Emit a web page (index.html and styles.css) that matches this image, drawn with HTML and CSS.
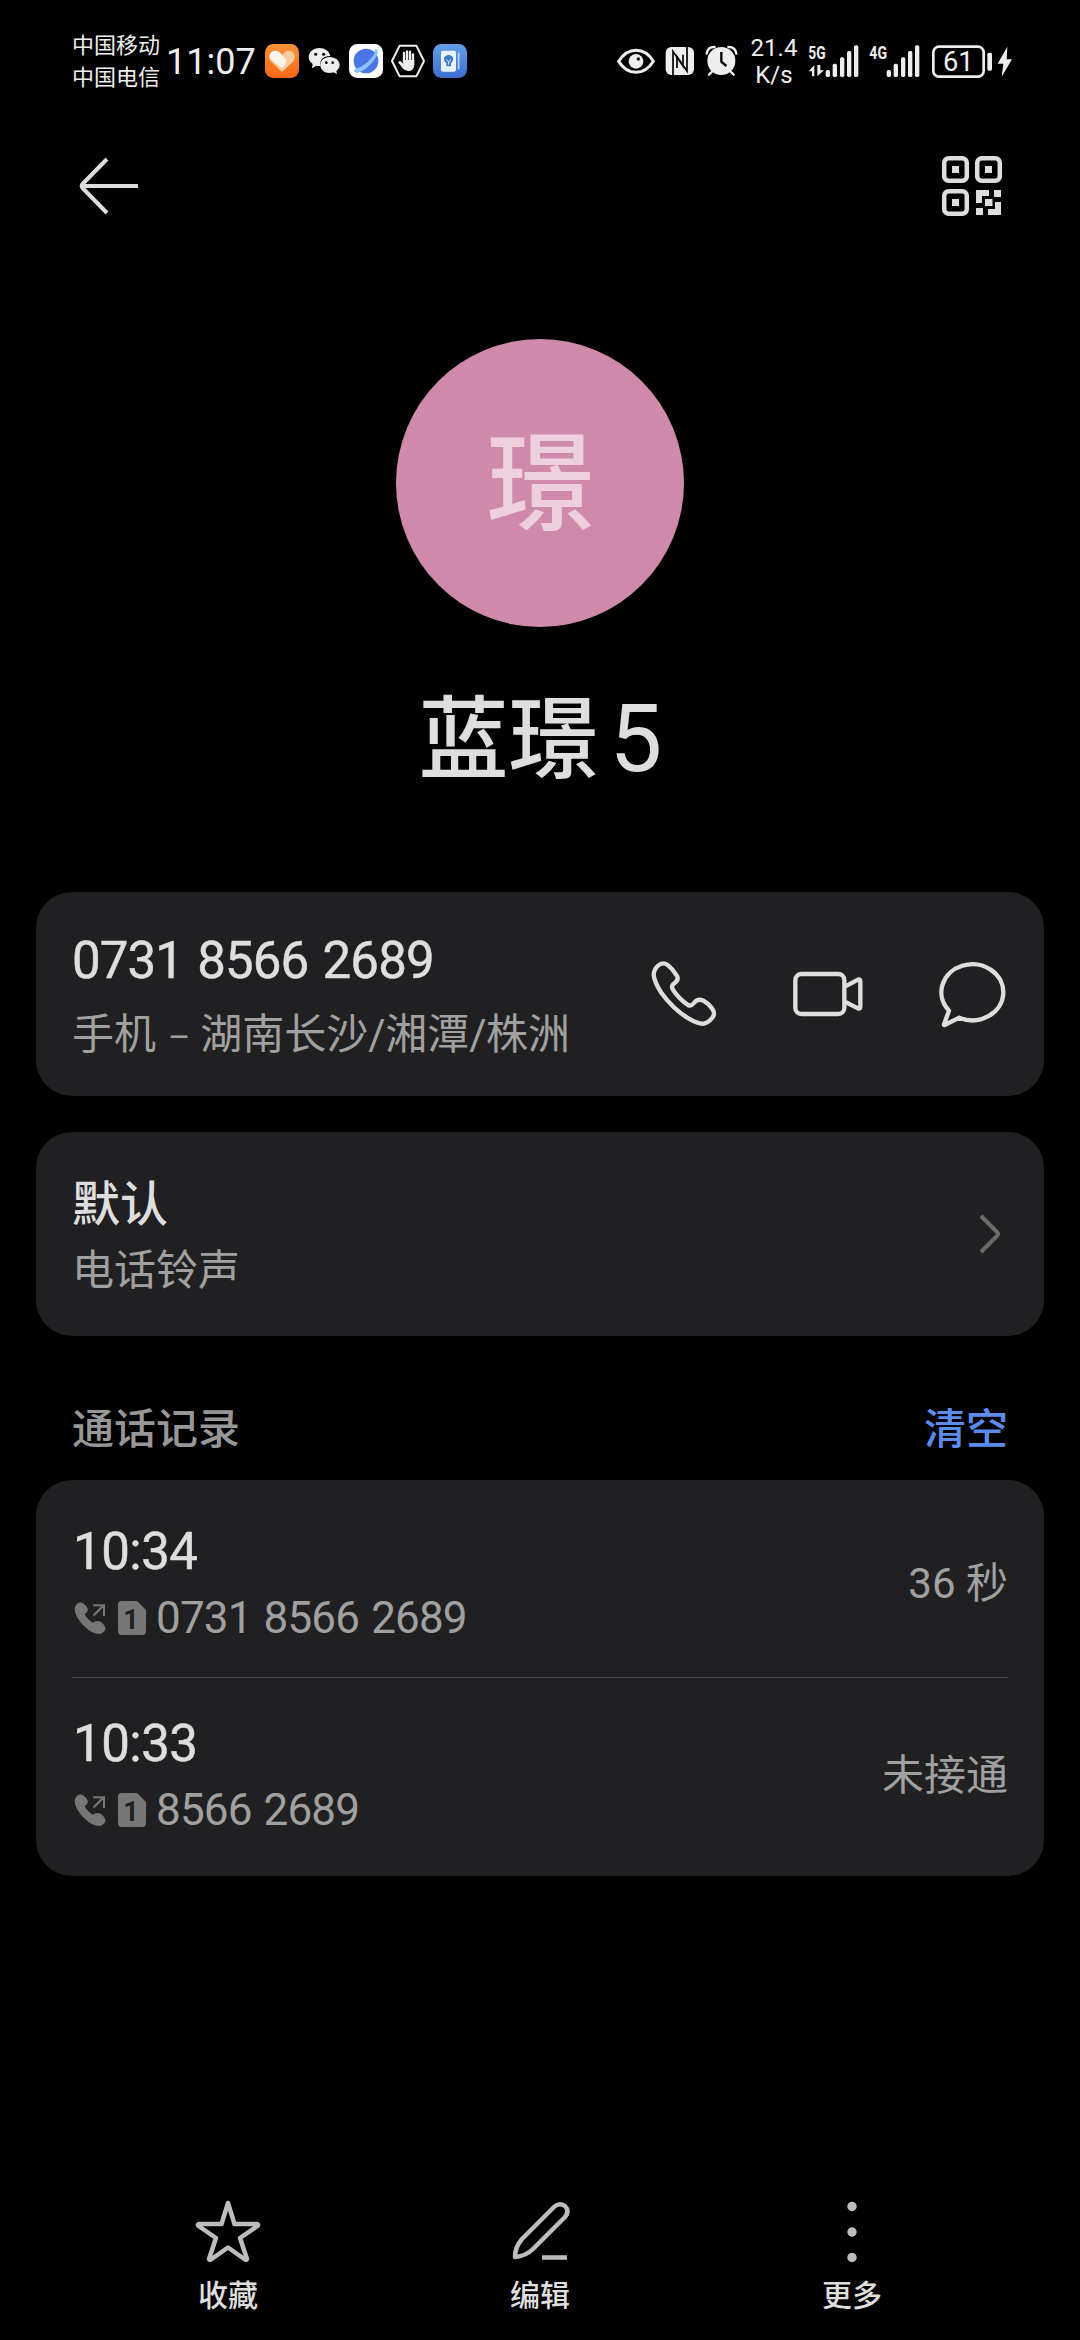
FILE: index.html
```html
<!DOCTYPE html>
<html lang="zh-CN">
<head>
    <meta charset="UTF-8">
    <meta name="viewport" content="width=device-width, initial-scale=1.0">
    <title>联系人详情</title>
    <link rel="stylesheet" href="styles.css">
</head>
<body>
    <div class="status-bar">
        <div class="carriers">
            <div>中国移动</div>
            <div>中国电信</div>
        </div>
        <div class="clock">11:07</div>
        <div class="app-icons">
            <svg width="34" height="34" viewBox="45 72 102 102">
                <defs>
                    <linearGradient id="orange" x1="0" y1="0" x2="0" y2="1"><stop offset="0" stop-color="#f8943a"/><stop offset="1" stop-color="#fa6618"/></linearGradient>
                    <linearGradient id="blue" x1="0" y1="0" x2="0" y2="1"><stop offset="0" stop-color="#63a0e8"/><stop offset="1" stop-color="#3b6ed0"/></linearGradient>
                </defs>
                <rect x="45" y="72" width="102" height="102" rx="25" fill="url(#orange)"/>
                <path d="M96 156L63 124Q53 110 62 99Q74 87 88 96L96 104L105 96Q120 87 131 99Q139 110 130 124Z" fill="#fccb9f"/>
                <path d="M96 144L63 120Q54 109 62 99Q74 87 88 96L107 117Q111 130 103 137Z" fill="#fff4ea"/>
            </svg>
            <svg width="34" height="34" viewBox="171 72 102 102">
                <path d="M208 84C190 84 176 96 176 111C176 120 181 127 188 132L186 145L199 137C203 138 207 138 212 137C207 120 222 107 241 108C238 93 224 84 208 84Z" fill="#eee"/>
                <path d="M239 111C223 111 211 122 211 135C211 149 223 159 239 159C243 159 247 158 250 157L261 162L259 153C265 149 269 142 269 135C269 122 256 111 239 111Z" fill="#eee"/>
                <circle cx="197" cy="103" r="4.500"/><circle cx="221" cy="103" r="4.500"/>
                <circle cx="229" cy="128" r="4"/><circle cx="248" cy="128" r="4"/>
            </svg>
            <svg width="34" height="34" viewBox="297 72 102 102">
                <rect x="297" y="72" width="102" height="102" rx="25" fill="#fff"/>
                <circle cx="348" cy="123" r="37" fill="#4a76e6"/>
                <path d="M314 148Q308 160 323 158Q345 152 366 128Q386 105 383 90Q380 85 371 90Q382 92 365 113Q345 138 314 148Z" fill="#8bc4fa"/>
            </svg>
            <svg width="34" height="34" viewBox="423 72 102 102">
                <path d="M449 77H499L522 123L499 169H449L426 123Z" fill="none" stroke="#eee" stroke-width="6" stroke-linejoin="round"/>
                <path d="M462 125V99M471 125V94M480 125V95M489 127V103" stroke="#eee" stroke-width="7" stroke-linecap="round"/>
                <path d="M458 120H493V135Q491 153 475 153Q463 152 457 143L445 128Q445 122 451 123L460 131Z" fill="#eee"/>
            </svg>
            <svg width="34" height="34" viewBox="549 72 102 102">
                <rect x="549" y="72" width="102" height="102" rx="25" fill="url(#blue)"/>
                <rect x="573" y="92" width="45" height="63" rx="6" fill="#e6f2fd"/>
                <path d="M626 98V148" stroke="#b8d6f5" stroke-width="5"/>
                <path d="M589 129C575 119 583 105 596 105C609 105 616 119 603 129V139H589Z" fill="#3f79c9"/>
                <path d="M589 119L596 125L603 119M596 125V134" fill="none" stroke="#e6f2fd" stroke-width="3"/>
            </svg>
        </div>
        <div class="system-icons">
            <svg width="38" height="34" viewBox="49 72 114 102">
                <path d="M54 124Q75 91 106 91Q138 91 158 124Q138 157 106 157Q75 157 54 124Z" fill="none" stroke="#eee" stroke-width="9"/>
                <circle cx="106" cy="124" r="22" fill="#eee"/><circle cx="113" cy="117" r="5"/>
            </svg>
            <svg class="nfc" width="30" height="34" viewBox="194 72 90 102">
                <rect x="196" y="81" width="85" height="84" rx="17" fill="#eee"/>
                <path d="M218 165V94L248 138V104" fill="none" stroke="#000" stroke-width="5"/>
                <path d="M230 144V110L260 153V81" fill="none" stroke="#000" stroke-width="5"/>
            </svg>
            <svg width="34" height="34" viewBox="314 72 102 102">
                <path d="M319 101Q322 80 343 81M384 81Q405 80 408 101M334 156L326 164M392 156L400 164" stroke="#eee" stroke-width="7" fill="none" stroke-linecap="round"/>
                <circle cx="363" cy="123" r="42" fill="#eee"/>
                <path d="M363 96V125L378 138" fill="none" stroke="#000" stroke-width="7"/>
            </svg>
            <div class="speed">
                <div>21.4</div>
                <div>K/s</div>
            </div>
            <svg width="52" height="34" viewBox="24 72 156 102" fill="#eee">
                <text x="25" y="118" class="net" textLength="52" lengthAdjust="spacingAndGlyphs">5G</text>
                <path d="M26 154L43 135V169H36V154ZM52 135V169L72 151H61V135Z"/>
                <rect x="77" y="150" width="13" height="21" rx="5"/><rect x="98" y="131" width="13" height="40" rx="5"/><rect x="120" y="112" width="13" height="59" rx="5"/><rect x="141" y="93" width="13" height="78" rx="5"/><rect x="162" y="76" width="13" height="95" rx="5"/>
            </svg>
            <svg class="sim-two" width="52" height="34" viewBox="207 72 156 102" fill="#eee">
                <text x="208" y="118" class="net" textLength="53" lengthAdjust="spacingAndGlyphs">4G</text>
                <rect x="260" y="150" width="13" height="21" rx="5"/><rect x="281" y="131" width="13" height="40" rx="5"/><rect x="303" y="112" width="13" height="59" rx="5"/><rect x="324" y="93" width="13" height="78" rx="5"/><rect x="345" y="76" width="13" height="95" rx="5"/>
            </svg>
            <svg class="battery" width="62" height="34" viewBox="393 72 186 102" fill="#eee">
                <rect x="400" y="80" width="151" height="90" rx="17" fill="none" stroke="#eee" stroke-width="8"/>
                <rect x="562" y="98" width="14" height="54" rx="5"/>
                <text x="475" y="153" class="level" text-anchor="middle">61</text>
            </svg>
            <svg width="16" height="34" viewBox="591 72 48 102" fill="#eee">
                <path d="M622 80L593 131H610L605 170L636 118H620Z"/>
            </svg>
        </div>
    </div>

    <div class="top-bar">
        <svg width="60" height="60" viewBox="79 156 60 60" fill="none" stroke="#dedede" stroke-width="4">
            <path d="M107 159L83 183.500Q80.500 186 83 188.500L107 213M82 186H138"/>
        </svg>
        <svg width="60" height="60" viewBox="942 156 60 60" fill="#dedede">
            <g fill="none" stroke="#dedede" stroke-width="4.500">
                <rect x="944.200" y="158.200" width="22.600" height="22.600" rx="4.500"/>
                <rect x="977.200" y="158.200" width="22.600" height="22.600" rx="4.500"/>
                <rect x="944.200" y="191.200" width="22.600" height="22.600" rx="4.500"/>
            </g>
            <path d="M952 166h7v7h-7zM985 166h7v7h-7zM952 199h7v7h-7z"/>
            <path d="M976 190H989V196H982V203H976ZM994 190h7v7h-7zM985 199h7.500v7h-7.500zM976 208h7v7h-7zM995 202H1001V215H988V209H995Z"/>
        </svg>
    </div>

    <div class="profile">
        <div class="avatar">璟</div>
        <h1 class="name">蓝璟<span>5</span></h1>
    </div>

    <div class="card phone-card">
        <div>
            <div class="number">0731 8566 2689</div>
            <div class="sub">手机<span class="dash">–</span>湖南长沙<span class="slash">/</span>湘潭<span class="slash">/</span>株洲</div>
        </div>
        <div class="actions">
            <svg width="68" height="68" viewBox="90 90 204 204">
                <path d="M113 108Q128 94 143 105Q160 118 171 138Q177 149 164 159Q151 168 160 181Q178 208 204 225Q213 230 222 219Q233 204 250 212Q268 222 278 238Q286 251 278 262Q266 278 252 281Q236 283 205 265Q160 238 125 190Q103 156 101 135Q101 120 113 108Z"/>
            </svg>
            <svg width="72" height="48" viewBox="516 120 216 144">
                <rect x="526" y="132" width="147" height="120" rx="18"/>
                <path d="M676 169L714 149Q721 147 721 153V231Q721 237 714 235L676 216"/>
            </svg>
            <svg width="68" height="68" viewBox="954 88 204 204">
                <path d="M1018 261L974 283Q971 284 972 281L987 240A93 84 0 1 1 1018 261Z"/>
            </svg>
        </div>
    </div>

    <div class="card ring-card">
        <div>
            <div class="title">默认</div>
            <div class="sub">电话铃声</div>
        </div>
        <svg width="24" height="42" viewBox="978 1213 24 42" fill="none" stroke="#6b6b6c" stroke-width="4">
            <path d="M981 1216L997 1232Q999 1234 997 1236L981 1252"/>
        </svg>
    </div>

    <div class="section-head">
        <span>通话记录</span>
        <a class="clear">清空</a>
    </div>

    <div class="card log-card">
        <div class="log">
            <div>
                <div class="time">10:34</div>
                <div class="log-number">
                    <svg class="outgoing" width="34" height="36" viewBox="73 1599 34 36">
                        <path d="M75 1606Q77 1601 81 1601.600Q87 1604 88 1609Q87 1612 84.600 1613Q86 1617 92.500 1621.700Q97 1618.500 101 1621Q105 1624 105.700 1628Q104 1632 100 1633Q92 1633 84 1625Q75 1616 74.600 1608Z" fill="#777"/>
                        <path d="M93 1604.300H104V1615M93.500 1614.500L103.500 1604.500" fill="none" stroke="#777" stroke-width="2"/>
                    </svg>
                    <svg class="sim" width="28" height="34" viewBox="118 1600 28 34">
                        <path d="M122 1600H137L146 1609V1630Q146 1634 142 1634H122Q118 1634 118 1630V1604Q118 1600 122 1600Z" fill="#777"/>
                        <text x="131" y="1628" text-anchor="middle" class="sim-digit">1</text>
                    </svg>
                    <span>0731 8566 2689</span>
                </div>
            </div>
            <div class="duration">36 秒</div>
        </div>
        <div class="log">
            <div>
                <div class="time">10:33</div>
                <div class="log-number">
                    <svg class="outgoing" width="34" height="36" viewBox="73 1599 34 36">
                        <path d="M75 1606Q77 1601 81 1601.600Q87 1604 88 1609Q87 1612 84.600 1613Q86 1617 92.500 1621.700Q97 1618.500 101 1621Q105 1624 105.700 1628Q104 1632 100 1633Q92 1633 84 1625Q75 1616 74.600 1608Z" fill="#777"/>
                        <path d="M93 1604.300H104V1615M93.500 1614.500L103.500 1604.500" fill="none" stroke="#777" stroke-width="2"/>
                    </svg>
                    <svg class="sim" width="28" height="34" viewBox="118 1600 28 34">
                        <path d="M122 1600H137L146 1609V1630Q146 1634 142 1634H122Q118 1634 118 1630V1604Q118 1600 122 1600Z" fill="#777"/>
                        <text x="131" y="1628" text-anchor="middle" class="sim-digit">1</text>
                    </svg>
                    <span>8566 2689</span>
                </div>
            </div>
            <div class="duration">未接通</div>
        </div>
    </div>

    <div class="toolbar">
        <div class="tool">
            <svg width="72" height="72" viewBox="192 2196 72 72">
                <path d="M228 2203L234.500 2224H257Q259 2224.500 257.500 2226L240 2238L247 2259Q246.500 2260.500 245 2259.500L228 2247.500L211 2259.500Q209.500 2260.500 209 2259L216 2238L198.500 2226Q197 2224.500 199 2224H221.500Z"/>
            </svg>
            <span>收藏</span>
        </div>
        <div class="tool">
            <svg width="72" height="72" viewBox="504 2196 72 72">
                <path d="M515 2257Q515 2247 522 2239L554 2207Q559 2202 565 2206Q570 2211 565 2217L533 2249Q526 2256 515 2257ZM542 2257.500H567"/>
            </svg>
            <span>编辑</span>
        </div>
        <div class="tool">
            <svg width="72" height="72" viewBox="816 2196 72 72">
                <g fill="#bdbdbd" stroke="none"><circle cx="852" cy="2206.500" r="4.700"/><circle cx="852" cy="2232" r="4.700"/><circle cx="852" cy="2257.500" r="4.700"/></g>
            </svg>
            <span>更多</span>
        </div>
    </div>
</body>
</html>
```
FILE: styles.css
```css
* {
    box-sizing: border-box;
}
body {
    margin: 0;
    width: 1080px;
    height: 2340px;
    background: #000;
    color: #dedede;
    font-family: Roboto, "Noto Sans CJK SC", sans-serif;
    display: flex;
    flex-direction: column;
    overflow: hidden;
}
svg {
    display: block;
    flex: none;
    overflow: visible;
}

/* status bar */
.status-bar {
    display: flex;
    align-items: center;
    height: 122px;
    padding: 0 67px 0 72px;
    color: #eee;
}
.carriers {
    width: 94px;
    padding-top: 2px;
    font-size: 22px;
    line-height: 32px;
    white-space: nowrap;
}
.clock {
    width: 99px;
    padding-top: 1px;
    font-size: 36px;
    line-height: 40px;
}
.app-icons {
    display: flex;
    gap: 8px;
}
.system-icons {
    display: flex;
    align-items: center;
    margin-left: auto;
}
.nfc {
    margin: 0 10px;
}
.speed {
    width: 69px;
    padding: 1px 0 0 1px;
    font-size: 24px;
    line-height: 27px;
    text-align: center;
}
.sim-two {
    margin-left: 9px;
}
.battery {
    margin: 0 4px 0 10px;
}
.net {
    font-size: 54px;
    font-weight: 700;
}
.level {
    font-size: 82px;
}

/* header */
.top-bar {
    display: flex;
    justify-content: space-between;
    padding: 34px 78px 0 79px;
    height: 217px;
}
.profile {
    display: flex;
    flex-direction: column;
    align-items: center;
    height: 553px;
}
.avatar {
    width: 288px;
    height: 288px;
    padding-left: 1px;
    border-radius: 50%;
    background: #cf8aab;
    color: #eecfde;
    font-size: 108px;
    font-weight: 500;
    line-height: 293px;
    text-align: center;
}
.name {
    margin: 47px 0 0;
    padding-left: 1px;
    font-size: 90px;
    font-weight: 500;
    line-height: 130px;
}
.name span {
    margin-left: 11px;
    font-size: 94px;
    font-weight: 400;
}

/* cards */
.card {
    margin: 0 36px;
    padding: 0 36px;
    border-radius: 36px;
    background: #202022;
}
.phone-card,
.ring-card {
    display: flex;
    justify-content: space-between;
    height: 204px;
    padding-top: 38px;
}
.number {
    padding-top: 1px;
    font-size: 51px;
    line-height: 60px;
    letter-spacing: -0.9px;
    word-spacing: 2.5px;
    -webkit-text-stroke: 0.5px #dedede;
}
.sub {
    color: #a0a0a0;
    font-size: 42px;
    line-height: 60px;
}
.phone-card .sub {
    margin-top: 14px;
}
.dash {
    margin: 0 10px 0 12px;
    font-size: 34px;
}
.slash {
    font-size: 42px;
    margin-right: -0.5px;
}
.actions {
    display: flex;
    align-items: center;
    gap: 74px;
    height: 128px;
    padding-right: 2px;
}
.actions svg {
    fill: none;
    stroke: #dedede;
    stroke-width: 13px;
    stroke-linejoin: round;
}
.ring-card {
    margin-top: 36px;
}
.ring-card svg {
    margin: 43px 6px 0 0;
}
.title {
    padding-top: 2px;
    font-size: 48px;
    font-weight: 500;
    line-height: 66px;
}
.ring-card .sub {
    padding-top: 3px;
}
.section-head {
    display: flex;
    justify-content: space-between;
    align-items: center;
    height: 144px;
    padding: 35px 72px 0;
    color: #979797;
    font-size: 42px;
    font-weight: 500;
}
.clear {
    color: #5c8ceb;
}

/* call log */
.log-card {
    height: 396px;
    padding-top: 5px;
}
.log {
    display: flex;
    justify-content: space-between;
    align-items: center;
    height: 192px;
}
.log + .log {
    border-top: 1px solid #48484a;
}
.time {
    padding: 7px 0 0 1px;
    font-size: 51px;
    line-height: 60px;
    letter-spacing: -0.5px;
    -webkit-text-stroke: 0.5px #dedede;
}
.log-number {
    display: flex;
    align-items: center;
    height: 60px;
    margin-top: 6px;
    color: #a0a0a0;
    font-size: 44px;
    letter-spacing: -0.85px;
    word-spacing: 2px;
}
.outgoing {
    margin-left: 1px;
}
.sim {
    margin: 0 10px 0 11px;
}
.sim-digit {
    fill: #202022;
    font-size: 27px;
    font-weight: 700;
    letter-spacing: 0;
}
.duration {
    padding-bottom: 4px;
    color: #a0a0a0;
    font-size: 42px;
}

/* bottom toolbar */
.toolbar {
    display: grid;
    grid-template-columns: repeat(3, 1fr);
    margin-top: auto;
    height: 144px;
    padding: 0 72px;
}
.tool {
    display: flex;
    flex-direction: column;
    align-items: center;
    font-size: 30px;
    font-weight: 500;
}
.tool svg {
    fill: none;
    stroke: #bdbdbd;
    stroke-width: 4.500px;
    stroke-linejoin: round;
}
.tool span {
    margin-top: 6px;
    line-height: 44px;
}
```
